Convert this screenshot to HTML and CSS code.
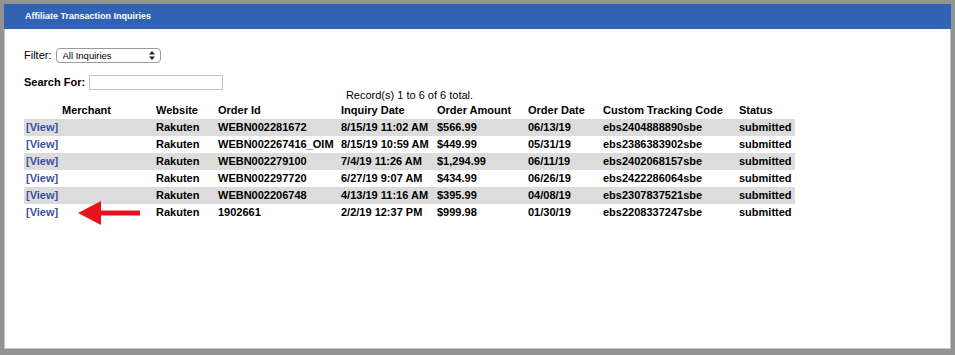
FILE: index.html
```html
<!DOCTYPE html>
<html>
<head>
<meta charset="utf-8">
<link rel="stylesheet" href="styles.css">
</head>
<body>
<div class="panel">
  <div class="panel-head">Affiliate Transaction Inquiries</div>
  <div class="panel-body">
    <div class="form-row filter-row">
      <label class="lbl">Filter:</label>
      <div class="select-wrap">
        <select class="select"><option>All Inquiries</option></select>
        <svg class="select-arrows" width="6" height="9" viewBox="0 0 6 9"><path d="M0 3.5 L3 0 L6 3.5 Z M0 5.5 L3 9 L6 5.5 Z" fill="#222"/></svg>
      </div>
    </div>
    <div class="form-row search-row">
      <label class="lbl bold">Search For:</label>
      <input class="search" type="text">
    </div>
    <div class="table-wrap">
      <table class="grid">
        <caption>Record(s) 1 to 6 of 6 total.</caption>
        <colgroup>
          <col class="c1"><col class="c2"><col class="c3"><col class="c4"><col class="c5"><col class="c6"><col class="c7"><col class="c8"><col class="c9">
        </colgroup>
        <thead>
          <tr><th></th><th>Merchant</th><th>Website</th><th>Order Id</th><th>Inquiry Date</th><th>Order Amount</th><th>Order Date</th><th>Custom Tracking Code</th><th>Status</th></tr>
        </thead>
        <tbody>
          <tr class="alt"><td><a class="view">[View]</a></td><td></td><td>Rakuten</td><td>WEBN002281672</td><td>8/15/19 11:02 AM</td><td>$566.99</td><td>06/13/19</td><td>ebs2404888890sbe</td><td>submitted</td></tr>
          <tr><td><a class="view">[View]</a></td><td></td><td>Rakuten</td><td>WEBN002267416_OIM</td><td>8/15/19 10:59 AM</td><td>$449.99</td><td>05/31/19</td><td>ebs2386383902sbe</td><td>submitted</td></tr>
          <tr class="alt"><td><a class="view">[View]</a></td><td></td><td>Rakuten</td><td>WEBN002279100</td><td>7/4/19 11:26 AM</td><td>$1,294.99</td><td>06/11/19</td><td>ebs2402068157sbe</td><td>submitted</td></tr>
          <tr><td><a class="view">[View]</a></td><td></td><td>Rakuten</td><td>WEBN002297720</td><td>6/27/19 9:07 AM</td><td>$434.99</td><td>06/26/19</td><td>ebs2422286064sbe</td><td>submitted</td></tr>
          <tr class="alt"><td><a class="view">[View]</a></td><td></td><td>Rakuten</td><td>WEBN002206748</td><td>4/13/19 11:16 AM</td><td>$395.99</td><td>04/08/19</td><td>ebs2307837521sbe</td><td>submitted</td></tr>
          <tr><td><a class="view">[View]</a></td><td></td><td>Rakuten</td><td>1902661</td><td>2/2/19 12:37 PM</td><td>$999.98</td><td>01/30/19</td><td>ebs2208337247sbe</td><td>submitted</td></tr>
        </tbody>
      </table>
      <svg class="arrow" width="62" height="24" viewBox="0 0 62 24"><path d="M0 12 L23 0 L23 9.5 L62 9.5 L62 14.5 L23 14.5 L23 24 Z" fill="#e8141c"/></svg>
    </div>
  </div>
</div>
</body>
</html>
```

FILE: styles.css
```css
html, body {
  margin: 0;
  padding: 0;
}
body {
  width: 955px;
  height: 355px;
  background: #939393;
  font-family: "Liberation Sans", Arial, Helvetica, sans-serif;
  font-size: 11px;
  color: #000;
  padding: 4px 0 0 4px;
  box-sizing: border-box;
}
.panel {
  width: 947px;
  height: 345px;
  background: #fff;
  border: 1px solid #c4c4c4;
  border-top: 0;
  box-sizing: border-box;
}
.panel-head {
  height: 25px;
  background: #3162b4;
  color: #fff;
  font-weight: bold;
  font-size: 9px;
  line-height: 25px;
  padding-left: 21px;
  margin-left: -1px;
  margin-right: -1px;
}
.panel-body {
  padding: 18px 0 0 19px;
}
.form-row {
  display: flex;
  align-items: center;
  height: 16px;
}
.search-row {
  margin-top: 11px;
}
.lbl {
  margin-right: 4px;
}
.bold {
  font-weight: bold;
}
.select-wrap {
  position: relative;
  width: 105px;
  height: 15px;
}
.select {
  appearance: none;
  -webkit-appearance: none;
  width: 105px;
  height: 15px;
  margin: 0;
  padding: 0 0 0 6px;
  border: 1px solid #9a9a9a;
  border-radius: 4px;
  background: #fff;
  font-family: "Liberation Sans", Arial, sans-serif;
  font-size: 9.5px;
  color: #000;
  box-sizing: border-box;
  line-height: 13px;
}
.select-arrows {
  position: absolute;
  right: 6px;
  top: 3px;
}
.search {
  width: 134px;
  height: 15px;
  margin: 0;
  padding: 0;
  border: 1px solid #c2c2c2;
  box-sizing: border-box;
}
.table-wrap {
  position: relative;
  width: 771px;
  margin-top: -1px;
}
.grid {
  border-collapse: collapse;
  table-layout: fixed;
  width: 771px;
}
.grid caption {
  height: 13px;
  line-height: 13px;
  padding-top: 0;
  text-align: center;
}
.grid th, .grid td {
  height: 17px;
  padding: 0 0 0 2px;
  text-align: left;
  font-weight: bold;
  white-space: nowrap;
  line-height: 17px;
  overflow: visible;
}
.grid tr.alt td {
  background: #dcdcdc;
}
.c1 { width: 36px; }
.c2 { width: 94px; }
.c3 { width: 62px; }
.c4 { width: 123px; }
.c5 { width: 96px; }
.c6 { width: 91px; }
.c7 { width: 75px; }
.c8 { width: 136px; }
.c9 { width: 58px; }
.view {
  color: #3b4f9e;
  text-decoration: none;
}
.arrow {
  position: absolute;
  left: 54px;
  top: 112px;
}
```
